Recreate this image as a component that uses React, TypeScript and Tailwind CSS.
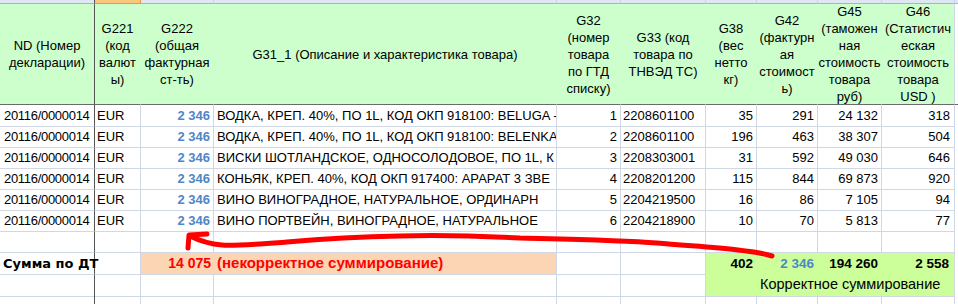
import React from 'react';

const grid = 'grid grid-cols-[95px_46px_73px_343px_64px_85px_51px_61px_64px_73px_3px]';
const font = "font-['Liberation_Sans',Arial,sans-serif]";
const line = 'border-[#d0d7e5]';

const headers: string[][] = [
  ['ND (Номер', 'декларации)'],
  ['G221', '(код', 'валют', 'ы)'],
  ['G222', '(общая', 'фактурная', 'ст-ть)'],
  ['G31_1 (Описание и характеристика товара)'],
  ['G32', '(номер', 'товара', 'по ГТД', 'списку)'],
  ['G33 (код', 'товара по', 'ТНВЭД ТС)'],
  ['G38', '(вес', 'нетто', 'кг)'],
  ['G42', '(фактурн', 'ая', 'стоимост', 'ь)'],
  ['G45', '(таможен', 'ная', 'стоимость', 'товара', 'руб)'],
  ['G46', '(Статистич', 'еская', 'стоимость', 'товара', 'USD )'],
];

interface Row {
  desc: string;
  n: string;
  code: string;
  net: string;
  inv: string;
  rub: string;
  usd: string;
}

// descriptions are cut where the cell ends, as in the sheet
const rows: Row[] = [
  { desc: 'ВОДКА, КРЕП. 40%, ПО 1L, КОД ОКП 918100: BELUGA -', n: '1', code: '2208601100', net: '35', inv: '291', rub: '24 132', usd: '318' },
  { desc: 'ВОДКА, КРЕП. 40%, ПО 1L, КОД ОКП 918100: BELENKA', n: '2', code: '2208601100', net: '196', inv: '463', rub: '38 307', usd: '504' },
  { desc: 'ВИСКИ ШОТЛАНДСКОЕ, ОДНОСОЛОДОВОЕ, ПО 1L, К', n: '3', code: '2208303001', net: '31', inv: '592', rub: '49 030', usd: '646' },
  { desc: 'КОНЬЯК, КРЕП. 40%, КОД ОКП 917400: АРАРАТ 3 ЗВЕ', n: '4', code: '2208201200', net: '115', inv: '844', rub: '69 873', usd: '920' },
  { desc: 'ВИНО ВИНОГРАДНОЕ, НАТУРАЛЬНОЕ, ОРДИНАРН', n: '5', code: '2204219500', net: '16', inv: '86', rub: '7 105', usd: '94' },
  { desc: 'ВИНО ПОРТВЕЙН, ВИНОГРАДНОЕ, НАТУРАЛЬНОЕ', n: '6', code: '2204218900', net: '10', inv: '70', rub: '5 813', usd: '77' },
];

const cell = `border-r border-b ${line} flex items-center overflow-hidden whitespace-nowrap`;
const first = 'border-r border-b border-r-[#555555] border-b-[#d0d7e5] flex items-center whitespace-nowrap';

const EmptyRow = ({ h = 'h-[21px]' }: { h?: string }) => (
  <div className={`${grid} ${h}`}>
    <div className={first} />
    {Array.from({ length: 9 }).map((_, i) => (
      <div key={i} className={cell} />
    ))}
    <div />
  </div>
);

const Arrow = () => (
  <svg className="absolute left-0 top-0 pointer-events-none" width="958" height="304" viewBox="0 0 958 304">
    <g fill="none" stroke="#ff0000" strokeWidth="5" strokeLinecap="round" strokeLinejoin="round">
      <path d="M 772 256 C 750 249, 700 247, 657 243 C 620 240, 560 239, 520 238 C 480 236, 430 235, 400 236 C 350 237, 310 240, 287 242 C 260 244, 235 246, 222 245 C 210 244, 198 240, 190 236" />
      <path d="M 188 248 L 189 235 L 207 234" />
    </g>
  </svg>
);

export default function App() {
  return (
    <div className={`relative w-[958px] h-[304px] overflow-hidden bg-white text-[13px] text-black ${font}`}>
      {/* column header strip */}
      <div className={`${grid} h-[4px] bg-[#dfe7f2]`}>
        <div className="border-r border-b border-r-[#555555] border-b-[#9eb6ce]" />
        <div className="bg-[#f8c77b] border-r border-b border-r-[#f0963a] border-b-[#f0963a]" />
        {Array.from({ length: 8 }).map((_, i) => (
          <div key={i} className="border-r border-b border-r-[#c5d3e6] border-b-[#9eb6ce]" />
        ))}
        <div className="border-b border-b-[#9eb6ce]" />
      </div>

      {/* header row */}
      <div className={`${grid} h-[101px]`}>
        {headers.map((lines, i) => (
          <div
            key={i}
            className={`bg-[#ccffcc] border-b border-b-[#6b6b6b] border-r flex flex-col items-center justify-center overflow-hidden leading-[17px] text-center ${
              i === 0 ? 'border-r-[#555555]' : i === 9 ? 'border-r-[#d0d7e5]' : 'border-r-[#ccffcc]'
            }`}
          >
            {lines.map((t, j) => (
              <span key={j} className="whitespace-nowrap">{t}</span>
            ))}
          </div>
        ))}
        <div className="border-b border-b-[#6b6b6b]" />
      </div>

      {/* data rows */}
      {rows.map((r, i) => (
        <div key={i} className={`${grid} ${i === 0 ? 'h-[22px]' : 'h-[21px]'}`}>
          <div className={`${first} pl-[4px] tracking-[-0.3px]`}>20116/0000014</div>
          <div className={`${cell} pl-[2px]`}>EUR</div>
          <div className={`${cell} justify-end pr-[3px] font-bold text-[#4f86c6]`}>2 346</div>
          <div className={`${cell} pl-[3px]`}>{r.desc}</div>
          <div className={`${cell} justify-end pr-[3px]`}>{r.n}</div>
          <div className={`${cell} pl-[2px]`}>{r.code}</div>
          <div className={`${cell} justify-end pr-[3px]`}>{r.net}</div>
          <div className={`${cell} justify-end pr-[3px]`}>{r.inv}</div>
          <div className={`${cell} justify-end pr-[3px]`}>{r.rub}</div>
          <div className={`${cell} justify-end pr-[4px]`}>{r.usd}</div>
          <div />
        </div>
      ))}

      <EmptyRow />

      {/* sum row */}
      <div className={`${grid} h-[21px] font-bold`}>
        <div className={`${first} pl-[3px] overflow-visible relative z-10 font-['DejaVu_Sans',sans-serif] text-[13px]`}>
          Сумма по ДТ
        </div>
        <div className={cell} />
        <div className="bg-[#fcd5b4] border-b border-b-[#d0d7e5] flex items-center justify-end pr-[3px] text-[14px] text-[#ff0000] whitespace-nowrap">
          14 075
        </div>
        <div className={`${cell} bg-[#fcd5b4] pl-[3px] text-[15px] text-[#ff0000]`}>(некорректное суммирование)</div>
        <div className={cell} />
        <div className={cell} />
        <div className="bg-[#ccff99] flex items-center justify-end pr-[4px] text-[13.5px]">402</div>
        <div className="bg-[#ccff99] flex items-center justify-end pr-[4px] text-[13.5px] text-[#4f86c6]">2 346</div>
        <div className="bg-[#ccff99] flex items-center justify-end pr-[4px] text-[13.5px]">194 260</div>
        <div className="bg-[#ccff99] border-r border-r-[#d0d7e5] flex items-center justify-end pr-[5px] text-[13.5px]">2 558</div>
        <div />
      </div>

      {/* correct sum caption */}
      <div className={`${grid} h-[21px]`}>
        <div className={first} />
        {Array.from({ length: 5 }).map((_, i) => (
          <div key={i} className={cell} />
        ))}
        <div className="bg-[#ccff99] border-b border-b-[#d0d7e5]" />
        <div className="col-span-3 bg-[#ccff99] border-r border-b border-[#d0d7e5] flex items-center pl-[3px] text-[14.5px] whitespace-nowrap">
          Корректное суммирование
        </div>
        <div />
      </div>

      <EmptyRow />

      <Arrow />
    </div>
  );
}
